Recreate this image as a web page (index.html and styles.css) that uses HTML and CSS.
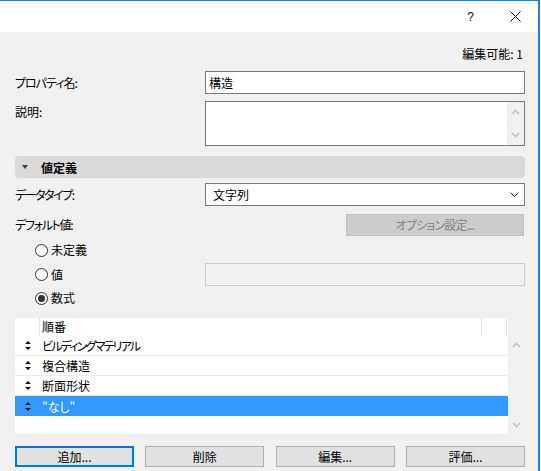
FILE: index.html
```html
<!DOCTYPE html>
<html lang="ja">
<head>
<meta charset="utf-8">
<link rel="stylesheet" href="styles.css">
</head>
<body>
<div class="window">
  <div class="titlebar">
    <span class="help">?</span>
    <span class="close"><svg width="11" height="11" viewBox="0 0 11 11"><path d="M0.5 0.5L10.5 10.5M10.5 0.5L0.5 10.5" stroke="#111" stroke-width="1" fill="none"/></svg></span>
  </div>
  <div class="content">
    <div class="editable">編集可能: 1</div>

    <div class="row r-name">
      <span class="lbl"><span class="k1">プロパティ名</span>:</span>
      <div class="field input">構造</div>
    </div>

    <div class="row r-desc">
      <span class="lbl top">説明:</span>
      <div class="field textarea">
        <div class="vscroll">
          <svg class="chev" width="9" height="6" viewBox="0 0 9 6"><polyline points="1,5 4.5,1.5 8,5" fill="none" stroke="#c4c4c4" stroke-width="1.6"/></svg>
          <svg class="chev" width="9" height="6" viewBox="0 0 9 6"><polyline points="1,1 4.5,4.5 8,1" fill="none" stroke="#c4c4c4" stroke-width="1.6"/></svg>
        </div>
      </div>
    </div>

    <div class="section"><span class="tri"></span><span class="sec-title">値定義</span></div>

    <div class="row r-type">
      <span class="lbl"><span class="k15">データタイプ</span>:</span>
      <div class="field select"><span>文字列</span>
        <svg width="9" height="5" viewBox="0 0 9 5"><polyline points="0.5,0.5 4.5,4.5 8.5,0.5" fill="none" stroke="#333" stroke-width="1"/></svg>
      </div>
    </div>

    <div class="row r-default">
      <span class="lbl"><span class="k13">デフォルト値</span>:</span>
      <div class="btn-disabled">オプション設定...</div>
    </div>

    <div class="row r-radio r-undef">
      <span class="radio-lbl"><span class="radio"></span>未定義</span>
    </div>

    <div class="row r-val">
      <span class="radio-lbl"><span class="radio"></span>値</span>
      <div class="field disabled"></div>
    </div>

    <div class="row r-radio r-formula">
      <span class="radio-lbl"><span class="radio checked"></span>数式</span>
    </div>

    <div class="list">
      <div class="table">
        <div class="thead">
          <div class="c-icon"></div>
          <div class="c-name">順番</div>
          <div class="c-extra"></div>
        </div>
        <div class="trow">
          <div class="c-icon"><svg class="sort" width="6" height="9" viewBox="0 0 6 9"><path d="M3 0L6 3H0Z M3 9L6 6H0Z" fill="#111"/></svg></div>
          <div class="c-name k18">ビルディングマテリアル</div>
        </div>
        <div class="trow">
          <div class="c-icon"><svg class="sort" width="6" height="9" viewBox="0 0 6 9"><path d="M3 0L6 3H0Z M3 9L6 6H0Z" fill="#111"/></svg></div>
          <div class="c-name">複合構造</div>
        </div>
        <div class="trow">
          <div class="c-icon"><svg class="sort" width="6" height="9" viewBox="0 0 6 9"><path d="M3 0L6 3H0Z M3 9L6 6H0Z" fill="#111"/></svg></div>
          <div class="c-name">断面形状</div>
        </div>
        <div class="trow selected">
          <div class="c-icon"><svg class="sort" width="6" height="9" viewBox="0 0 6 9"><path d="M3 0L6 3H0Z M3 9L6 6H0Z" fill="#111"/></svg></div>
          <div class="c-name">"なし"</div>
        </div>
      </div>
      <div class="lscroll">
        <svg class="chev" width="9" height="6" viewBox="0 0 9 6"><polyline points="1,5 4.5,1.5 8,5" fill="none" stroke="#c4c4c4" stroke-width="1.6"/></svg>
        <svg class="chev" width="9" height="6" viewBox="0 0 9 6"><polyline points="1,1 4.5,4.5 8,1" fill="none" stroke="#c4c4c4" stroke-width="1.6"/></svg>
      </div>
    </div>

    <div class="buttons">
      <div class="btn default">追加...</div>
      <div class="btn">削除</div>
      <div class="btn">編集...</div>
      <div class="btn">評価...</div>
    </div>
  </div>
</div>
</body>
</html>
```

FILE: styles.css
```css
html, body {
  margin: 0;
  padding: 0;
  background: #ffffff;
}

.window {
  width: 540px;
  height: 471px;
  box-sizing: border-box;
  border-top: 1px solid #1883d7;
  border-right: 2px solid #1883d7;
  background: #f0f0f0;
  font-family: "Noto Sans CJK JP", "Noto Sans", sans-serif;
  font-size: 12px;
  font-feature-settings: "palt";
  color: #000;
  overflow: hidden;
}

.k1 { letter-spacing: -1px; }
.k13 { letter-spacing: -1.3px; }
.k15 { letter-spacing: -1.5px; }
.k18 { letter-spacing: -1.8px; }

.titlebar {
  height: 31px;
  background: #ffffff;
  display: flex;
  align-items: center;
  justify-content: flex-end;
}

.help {
  font-family: "Liberation Sans", sans-serif;
  font-size: 12px;
  line-height: 14px;
  margin-right: 36px;
  color: #111;
}

.close {
  display: flex;
  margin-right: 17px;
}

.content {
  padding: 0 13px 0 15px;
}

.editable {
  margin-top: 14px;
  height: 16px;
  line-height: 16px;
  text-align: right;
  padding-right: 2px;
}

.row {
  display: grid;
  grid-template-columns: 190px 320px;
  align-items: center;
}

.lbl {
  line-height: 16px;
}

.lbl.top {
  align-self: start;
  padding-top: 3px;
}

.field {
  box-sizing: border-box;
  border: 1px solid #7a7a7a;
  background: #ffffff;
}

.r-name {
  margin-top: 9px;
}

.input {
  height: 23px;
  line-height: 21px;
  padding-left: 3px;
}

.r-desc {
  margin-top: 7px;
}

.textarea {
  height: 45px;
  display: flex;
  justify-content: flex-end;
}

.vscroll {
  width: 17px;
  background: #f0f0f0;
  box-sizing: border-box;
  padding: 7px 0;
  display: flex;
  flex-direction: column;
  justify-content: space-between;
  align-items: center;
}

.chev {
  display: block;
}

.section {
  margin-top: 10px;
  height: 22px;
  background: #d9d9d9;
  border-radius: 4px;
  display: flex;
  align-items: center;
}

.tri {
  width: 0;
  height: 0;
  border-left: 3.5px solid transparent;
  border-right: 3.5px solid transparent;
  border-top: 4px solid #444;
  margin-left: 7px;
  margin-right: 13px;
}

.sec-title {
  font-weight: bold;
}

.r-type {
  margin-top: 5px;
}

.select {
  height: 23px;
  display: flex;
  align-items: center;
  justify-content: space-between;
  padding: 0 5px 0 7px;
}

.r-default {
  margin-top: 8px;
}

.btn-disabled {
  justify-self: end;
  width: 178px;
  height: 22px;
  box-sizing: border-box;
  margin-right: 1px;
  background: #cccccc;
  border: 1px solid #bfbfbf;
  color: #838383;
  text-align: center;
  line-height: 20px;
  letter-spacing: -0.8px;
}

.r-radio {
  height: 20px;
}

.r-undef {
  margin-top: 4px;
}

.r-val {
  margin-top: 3px;
}

.r-formula {
  margin-top: 2px;
}

.radio-lbl {
  display: flex;
  align-items: center;
  padding-left: 20px;
  line-height: 16px;
}

.radio {
  width: 13px;
  height: 13px;
  box-sizing: border-box;
  border: 1px solid #333;
  border-radius: 50%;
  background: #fff;
  margin-right: 3px;
  display: flex;
  align-items: center;
  justify-content: center;
}

.radio.checked::after {
  content: "";
  width: 7px;
  height: 7px;
  border-radius: 50%;
  background: #333;
}

.disabled {
  height: 23px;
  border-color: #cccccc;
  background: #f0f0f0;
}

.list {
  margin-top: 10px;
  height: 116px;
  display: flex;
}

.table {
  width: 493px;
  background: #ffffff;
}

.thead {
  height: 18px;
  display: flex;
  line-height: 18px;
}

.thead .c-icon {
  width: 24px;
  border-right: 1px solid #e3e3e3;
}

.thead .c-name {
  flex: 1;
  padding-left: 2px;
  border-right: 1px solid #e3e3e3;
}

.thead .c-extra {
  width: 24px;
  border-right: 1px solid #e3e3e3;
  margin-right: 1px;
}

.trow {
  height: 19px;
  border-bottom: 1px solid #ebebeb;
  display: flex;
  align-items: center;
}

.trow .c-icon {
  width: 27px;
  display: flex;
  align-items: center;
  padding-left: 10px;
  box-sizing: border-box;
}

.trow.selected {
  height: 20px;
  border-bottom: none;
  background: #3399ff;
  color: #ffffff;
}

.sort {
  display: block;
}

.lscroll {
  width: 17px;
  box-sizing: border-box;
  padding: 24px 0 6px;
  display: flex;
  flex-direction: column;
  justify-content: space-between;
  align-items: center;
}

.buttons {
  margin-top: 12px;
  display: flex;
  justify-content: space-between;
}

.btn {
  width: 119px;
  height: 21px;
  box-sizing: border-box;
  background: #e1e1e1;
  border: 1px solid #adadad;
  text-align: center;
  line-height: 19px;
}

.btn.default {
  border: 2px solid #0078d7;
  line-height: 17px;
}
```
